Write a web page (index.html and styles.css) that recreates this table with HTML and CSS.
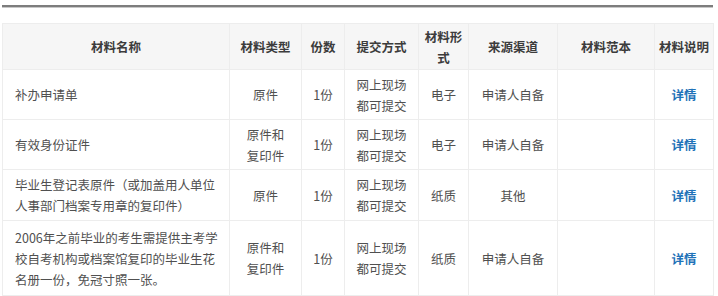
FILE: index.html
```html
<!DOCTYPE html>
<html lang="zh-CN">
<head>
<meta charset="utf-8">
<title>材料清单</title>
<link rel="stylesheet" href="styles.css">
</head>
<body>
<div class="page">
  <div class="rule"></div>
  <table class="materials">
    <colgroup>
      <col class="c-name">
      <col class="c-type">
      <col class="c-count">
      <col class="c-submit">
      <col class="c-form">
      <col class="c-source">
      <col class="c-sample">
      <col class="c-note">
    </colgroup>
    <thead>
      <tr>
        <th>材料名称</th>
        <th>材料类型</th>
        <th>份数</th>
        <th>提交方式</th>
        <th>材料形<br>式</th>
        <th>来源渠道</th>
        <th>材料范本</th>
        <th>材料说明</th>
      </tr>
    </thead>
    <tbody>
      <tr>
        <td class="name">补办申请单</td>
        <td>原件</td>
        <td>1份</td>
        <td>网上现场<br>都可提交</td>
        <td>电子</td>
        <td>申请人自备</td>
        <td></td>
        <td><a class="detail" href="#">详情</a></td>
      </tr>
      <tr>
        <td class="name">有效身份证件</td>
        <td>原件和<br>复印件</td>
        <td>1份</td>
        <td>网上现场<br>都可提交</td>
        <td>电子</td>
        <td>申请人自备</td>
        <td></td>
        <td><a class="detail" href="#">详情</a></td>
      </tr>
      <tr class="mid">
        <td class="name">毕业生登记表原件（或加盖用人单位<br>人事部门档案专用章的复印件）</td>
        <td>原件</td>
        <td>1份</td>
        <td>网上现场<br>都可提交</td>
        <td>纸质</td>
        <td>其他</td>
        <td></td>
        <td><a class="detail" href="#">详情</a></td>
      </tr>
      <tr class="tall">
        <td class="name">2006年之前毕业的考生需提供主考学<br>校自考机构或档案馆复印的毕业生花<br>名册一份，免冠寸照一张。</td>
        <td>原件和<br>复印件</td>
        <td>1份</td>
        <td>网上现场<br>都可提交</td>
        <td>纸质</td>
        <td>申请人自备</td>
        <td></td>
        <td><a class="detail" href="#">详情</a></td>
      </tr>
    </tbody>
  </table>
</div>
</body>
</html>
```

FILE: styles.css
```css
html, body {
  margin: 0;
  padding: 0;
  background: #ffffff;
}

body {
  font-family: "Noto Sans CJK SC", "Noto Sans", sans-serif;
  font-size: 12.5px;
  color: #505050;
}

.page {
  padding: 5px 5px 0 2px;
}

.rule {
  height: 2px;
  background: #7d7d7d;
  border-bottom: 1px solid #c8c8c8;
  margin-bottom: 15px;
}

.materials {
  width: 711px;
  table-layout: fixed;
  border-collapse: collapse;
}

.c-name { width: 227px; }
.c-type { width: 72px; }
.c-count { width: 43px; }
.c-submit { width: 74px; }
.c-form { width: 50px; }
.c-source { width: 89px; }
.c-sample { width: 97px; }
.c-note { width: 59px; }

.materials th,
.materials td {
  border: 1px solid #ededed;
  line-height: 21px;
  text-align: center;
  vertical-align: middle;
  padding: 3.5px 4px;
}

.materials th {
  background: #f6f6f6;
  color: #3c3c3c;
  font-weight: bold;
  padding: 1.5px 4px;
}

.materials td.name {
  text-align: left;
  padding-left: 12px;
}

.materials tr.mid td {
  padding-top: 4px;
  padding-bottom: 4px;
}

.materials tr.tall td {
  padding-top: 5.5px;
  padding-bottom: 5.5px;
}

.detail {
  color: #1f72b8;
  font-weight: bold;
  text-decoration: none;
}
```
